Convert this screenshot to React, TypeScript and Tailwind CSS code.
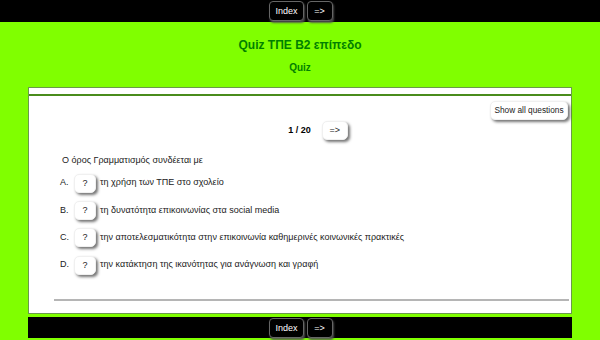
import React from "react";

function DarkBtn({ children }: { children: React.ReactNode }) {
  return (
    <button className="h-[20px] px-[5px] min-w-[26px] rounded-[4px] border border-[#666] bg-black text-white text-[9px] leading-none shadow-[1px_2px_2px_rgba(80,80,80,0.9)]">
      {children}
    </button>
  );
}

function LightBtn({ children, className = "" }: { children: React.ReactNode; className?: string }) {
  return (
    <button
      className={
        "h-[19px] rounded-[5px] bg-white text-[#222] leading-none shadow-[2px_2px_3px_rgba(0,0,0,0.55)] border border-[#f0f0f0] " +
        className
      }
    >
      {children}
    </button>
  );
}

const options = [
  ["A.", "τη χρήση των ΤΠΕ στο σχολείο"],
  ["B.", "τη δυνατότητα επικοινωνίας στα social media"],
  ["C.", "την αποτελεσματικότητα στην επικοινωνία καθημερινές κοινωνικές πρακτικές"],
  ["D.", "την κατάκτηση της ικανότητας για ανάγνωση και γραφή"],
];

export default function App() {
  return (
    <div
      className="w-[600px] h-[340px] bg-[#80ff00] overflow-hidden flex flex-col"
      style={{ fontFamily: '"Liberation Sans", Arial, sans-serif' }}
    >
      <div className="h-[22px] bg-black flex justify-center items-start gap-[3px] pt-[1px] pl-[2px]">
        <DarkBtn>Index</DarkBtn>
        <DarkBtn>=&gt;</DarkBtn>
      </div>
      <div className="flex flex-col items-center">
        <div className="mt-[15px] text-[12px] font-bold text-[#008000] leading-[16px]">Quiz ΤΠΕ B2 επίπεδο</div>
        <div className="mt-[9px] text-[10px] font-bold text-[#008000] leading-[12px]">Quiz</div>
      </div>
      <div className="mx-[28px] mt-[13px] border border-[#6a9a4a] bg-white">
        <div className="h-[8px] border-b-2 border-[#4a8c1c]" />
        <div className="h-[217px] flex flex-col relative">
          <div className="flex justify-end pr-[3px] pt-[5px]">
            <LightBtn className="w-[78px] text-[8.3px]">Show all questions</LightBtn>
          </div>
          <div className="flex justify-center items-center mt-[1px] pl-[36px] gap-[11px]">
            <span className="text-[9px] font-bold text-black">1 / 20</span>
            <LightBtn className="w-[26px] text-[9px]">=&gt;</LightBtn>
          </div>
          <div className="pl-[33px] mt-[14px] text-[9px] text-[#222]">Ο όρος Γραμματισμός συνδέεται με</div>
          <div className="flex flex-col gap-[8.4px] mt-[6px] pl-[31px]">
            {options.map(([l, t]) => (
              <div key={l} className="flex items-center text-[9px] text-[#222]">
                <span className="w-[14px]">{l}</span>
                <LightBtn className="w-[22px] text-[9px]">?</LightBtn>
                <span className="ml-[4px]">{t}</span>
              </div>
            ))}
          </div>
          <div className="absolute left-[25px] right-[2px] top-[203px] border-t-2 border-[#b5b5b5]" />
        </div>
      </div>
      <div className="mx-[28px] mt-[3px] h-[21px] bg-black flex justify-center items-start gap-[3px] pt-[1px] pl-[2px]">
        <DarkBtn>Index</DarkBtn>
        <DarkBtn>=&gt;</DarkBtn>
      </div>
    </div>
  );
}
